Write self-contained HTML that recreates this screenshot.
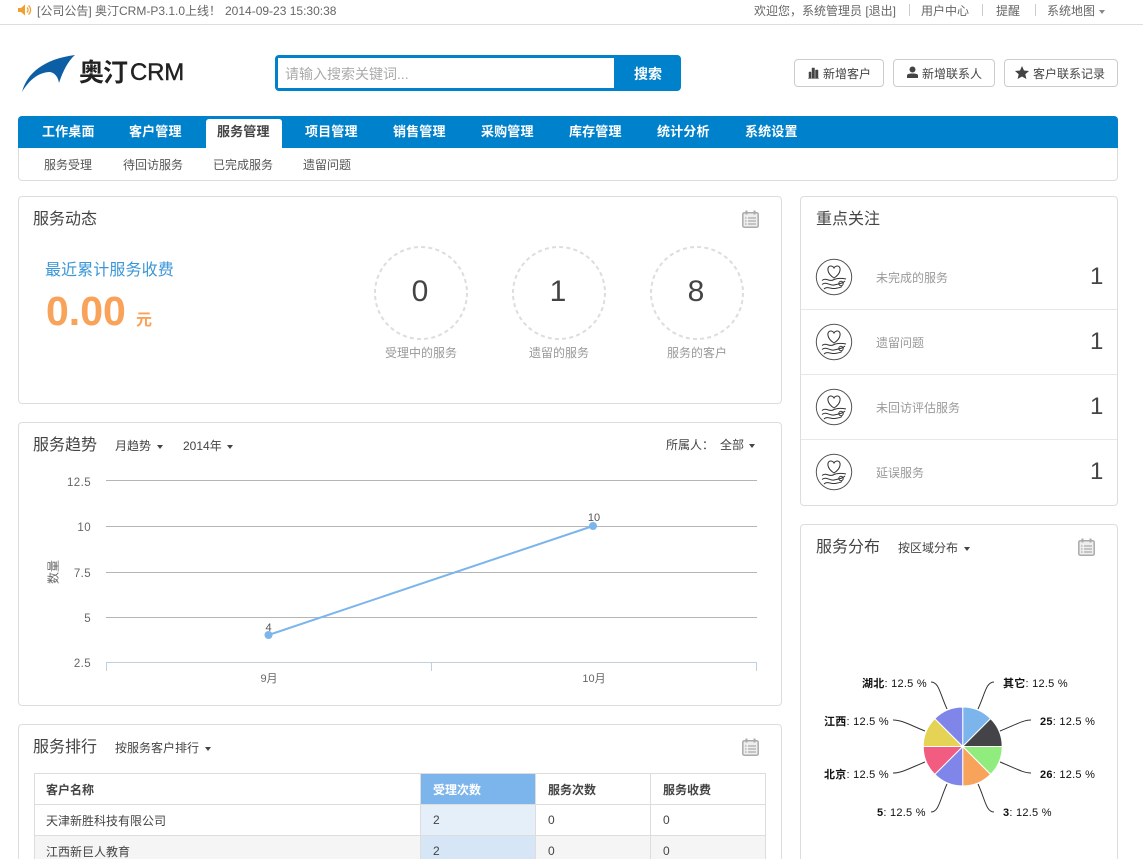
<!DOCTYPE html>
<html lang="zh"><head><meta charset="utf-8"><title>奥汀CRM</title>
<style>
html{margin:0;padding:0;background:#fff;width:1143px;height:859px;overflow:hidden}
body{margin:0;padding:0;background:#fff;width:1143px;height:859px;overflow:hidden;position:relative;font-family:"Liberation Sans","Noto Sans CJK SC",sans-serif;font-size:12px;color:#555}
.t{position:absolute;white-space:nowrap;line-height:20px;height:20px}
.b{position:absolute;box-sizing:border-box}
.panel{position:absolute;box-sizing:border-box;background:#fff;border:1px solid #ddd;border-radius:4px}
.h{font-size:16px;color:#444}
.sep{position:absolute;top:4px;width:1px;height:12px;background:#ccc}
.btn{position:absolute;top:59px;height:28px;box-sizing:border-box;border:1px solid #ccc;border-radius:4px;background:#fff;color:#444}
.nav{top:122px;font-size:13px;font-weight:bold;color:#fff;letter-spacing:.15px}
.sub{top:155px;color:#555}
.car{display:inline-block;width:0;height:0;border-left:3.500px solid transparent;border-right:3.500px solid transparent;border-top:4px solid #444;vertical-align:middle;margin-left:6px}
.num{position:absolute;top:247px;width:94px;height:90px;text-align:center;line-height:90px;font-size:30px;color:#444}
.cap{top:343px;color:#999;width:94px;text-align:center}
.row{position:absolute;left:801px;width:316px;height:1px;background:#e8e8e8}
.big{font-size:24px;color:#444;left:1090px;line-height:24px;height:24px}
.lb{left:876px;color:#999}
.cell{position:absolute;box-sizing:border-box;border:1px solid #ddd;padding:0 12px;line-height:30px;color:#444}
.zh{padding-top:1px}
svg{position:absolute;overflow:visible}
svg text{font-family:"Liberation Sans","Noto Sans CJK SC",sans-serif}
</style></head><body>

<!-- top bar -->
<div class="b" style="left:0;top:24px;width:1143px;height:1px;background:#ddd"></div>
<svg style="left:18px;top:3px" width="15" height="14" viewBox="0 0 15 14"><path d="M0 5h3l4-3.500v11L3 9H0z" fill="#f0a030"/><path d="M9 4.500a3.500 3.500 0 0 1 0 5M10.500 2.500a6 6 0 0 1 0 9" fill="none" stroke="#f0a030" stroke-width="1.300"/></svg>
<div class="t" style="left:37px;top:1px;color:#666">[公司公告] 奥汀CRM-P3.1.0上线！</div>
<div class="t" style="left:225px;top:1px;color:#666">2014-09-23 15:30:38</div>
<div class="t" style="left:754px;top:1px;color:#666">欢迎您，系统管理员 [退出]</div>
<div class="sep" style="left:909px"></div>
<div class="t" style="left:921px;top:1px;color:#666">用户中心</div>
<div class="sep" style="left:982px"></div>
<div class="t" style="left:996px;top:1px;color:#666">提醒</div>
<div class="sep" style="left:1035px"></div>
<div class="t" style="left:1047px;top:1px;color:#666">系统地图<span class="car" style="border-top-color:#888;margin-left:4px"></span></div>

<!-- logo -->
<svg style="left:20px;top:53px" width="60" height="40" viewBox="0 0 60 40"><path d="M2 39C7 20 24 6 55 2C48 8 43 18 39 30C38 24 35 20 30 19C19 19 9 27 2 39Z" fill="#0d5fa5"/></svg>
<div class="t" style="left:79px;top:58px;height:30px;line-height:30px;font-family:'Liberation Sans','Noto Sans CJK SC',sans-serif;font-size:25px;font-weight:bold;color:#222;letter-spacing:-1px">奥汀</div>
<div class="t" style="left:130px;top:58px;height:30px;line-height:30px;font-size:24px;color:#222;letter-spacing:-.2px;-webkit-text-stroke:.4px #222">CRM</div>

<!-- search -->
<div class="b" style="left:275px;top:55px;width:406px;height:36px;background:#0081cc;border-radius:4px"></div>
<div class="b" style="left:278px;top:58px;width:336px;height:30px;background:#fff"></div>
<div class="t" style="left:285px;top:64px;font-size:14px;color:#aaa">请输入搜索关键词...</div>
<div class="t" style="left:634px;top:64px;font-size:14px;font-weight:bold;color:#fff">搜索</div>

<!-- buttons -->
<div class="btn" style="left:794px;width:90px"></div>
<svg style="left:808px;top:67px" width="12" height="12" viewBox="0 0 12 12"><path d="M1 11V5h2v6zM4 11V1h2.500v10zM7.500 11V3H10v8zM0 11.500h11" fill="#444" stroke="#444" stroke-width=".5"/></svg>
<div class="t" style="left:823px;top:64px;color:#444">新增客户</div>
<div class="btn" style="left:893px;width:102px"></div>
<svg style="left:906px;top:66px" width="13" height="13" viewBox="0 0 13 13"><circle cx="6.500" cy="3.500" r="3" fill="#444"/><path d="M1 12V9.500C1 8 3 7.500 6.500 7.500S12 8 12 9.500V12z" fill="#444"/></svg>
<div class="t" style="left:922px;top:64px;color:#444">新增联系人</div>
<div class="btn" style="left:1004px;width:114px"></div>
<svg style="left:1015px;top:66px" width="14" height="13" viewBox="0 0 14 13"><path d="M7 0l2 4.500 5 .5-3.700 3.200 1.100 4.800L7 10.500 2.600 13l1.100-4.800L0 5l5-.5z" fill="#444"/></svg>
<div class="t" style="left:1033px;top:64px;color:#444">客户联系记录</div>

<!-- nav -->
<div class="b" style="left:18px;top:116px;width:1100px;height:65px;border:1px solid #ddd;border-radius:4px;background:#fff"></div>
<div class="b" style="left:18px;top:116px;width:1100px;height:32px;background:#0081cc;border-radius:4px 4px 0 0"></div>
<div class="b" style="left:206px;top:119px;width:76px;height:29px;background:#fff;border-radius:3px 3px 0 0"></div>
<div class="t nav" style="left:42px">工作桌面</div>
<div class="t nav" style="left:129px">客户管理</div>
<div class="t nav" style="left:217px;color:#444">服务管理</div>
<div class="t nav" style="left:305px">项目管理</div>
<div class="t nav" style="left:393px">销售管理</div>
<div class="t nav" style="left:481px">采购管理</div>
<div class="t nav" style="left:569px">库存管理</div>
<div class="t nav" style="left:657px">统计分析</div>
<div class="t nav" style="left:745px">系统设置</div>
<div class="t sub" style="left:44px">服务受理</div>
<div class="t sub" style="left:123px">待回访服务</div>
<div class="t sub" style="left:213px">已完成服务</div>
<div class="t sub" style="left:303px">遗留问题</div>

<!-- 服务动态 -->
<div class="panel" style="left:18px;top:196px;width:764px;height:208px"></div>
<div class="t h" style="left:33px;top:210px">服务动态</div>
<svg style="left:742px;top:210px" width="17" height="18" viewBox="0 0 17 18"><rect x=".8" y="2.800" width="15.400" height="14.400" rx="1.500" fill="#eee" stroke="#aaa" stroke-width="1.500"/><path d="M4.500 0.500v4M12.500 0.500v4" stroke="#aaa" stroke-width="2"/><path d="M6 8h8M6 11h8M6 14h8M3 8h1.500M3 11h1.500M3 14h1.500" stroke="#999" stroke-width="1"/></svg>
<div class="t" style="left:45px;top:261px;font-size:16px;color:#3c97d8;letter-spacing:.1px">最近累计服务收费</div>
<div class="t" style="left:46px;top:288px;height:46px;line-height:46px;font-size:41px;font-weight:bold;color:#f9a25a">0.00</div>
<div class="t" style="left:136px;top:311px;font-size:16px;font-weight:bold;color:#f9a25a">元</div>
<svg style="left:0;top:0" width="1143" height="859"><g fill="none" stroke="#ddd" stroke-width="2" stroke-dasharray="4 3.220"><circle cx="421" cy="293" r="46"/><circle cx="559" cy="293" r="46"/><circle cx="697" cy="293" r="46"/></g></svg>
<div class="num" style="left:373px">0</div>
<div class="num" style="left:511px">1</div>
<div class="num" style="left:649px">8</div>
<div class="t cap" style="left:374px">受理中的服务</div>
<div class="t cap" style="left:512px">遗留的服务</div>
<div class="t cap" style="left:650px">服务的客户</div>

<!-- 服务趋势 -->
<div class="panel" style="left:18px;top:422px;width:764px;height:284px"></div>
<div class="t h" style="left:33px;top:436px">服务趋势</div>
<div class="t" style="left:115px;top:436px;color:#444">月趋势<span class="car"></span></div>
<div class="t" style="left:183px;top:436px;color:#444">2014年<span class="car" style="margin-left:5px"></span></div>
<div class="t" style="left:666px;top:435px;color:#444">所属人：</div>
<div class="t" style="left:720px;top:435px;color:#444">全部<span class="car" style="margin-left:5px"></span></div>
<svg style="left:0;top:0" width="1143" height="859">
<g stroke="#b5b5b5" stroke-width="1" fill="none">
<path d="M106 480.500H757M106 526.500H757M106 572.500H757M106 617.500H757"/>
</g>
<path d="M106 662.500H757M106.500 662V671M431.500 662V671M756.500 662V671" stroke="#c0d0e0" fill="none"/>
<path d="M268.500 635L593 526" stroke="#7cb5ec" stroke-width="2" fill="none"/>
<circle cx="268.500" cy="635" r="4" fill="#7cb5ec"/><circle cx="593" cy="526" r="4" fill="#7cb5ec"/>
<g font-size="11.500" fill="#666" text-anchor="end" letter-spacing=".4">
<text x="91" y="486">12.5</text><text x="91" y="531">10</text><text x="91" y="577">7.5</text><text x="91" y="622">5</text><text x="91" y="667">2.5</text>
</g>
<g font-size="11" fill="#555" text-anchor="middle">
<text x="268.500" y="631">4</text><text x="594" y="521">10</text>
<text x="269" y="682" fill="#666">9月</text><text x="594" y="682" fill="#666">10月</text>
</g>
<text transform="translate(57.500 572) rotate(-90)" font-size="12" fill="#666" text-anchor="middle">数量</text>
</svg>

<!-- 服务排行 -->
<div class="panel" style="left:18px;top:724px;width:764px;height:150px"></div>
<div class="t h" style="left:33px;top:738px">服务排行</div>
<div class="t" style="left:115px;top:738px;color:#444">按服务客户排行<span class="car"></span></div>
<svg style="left:742px;top:738px" width="17" height="18" viewBox="0 0 17 18"><rect x=".8" y="2.800" width="15.400" height="14.400" rx="1.500" fill="#eee" stroke="#aaa" stroke-width="1.500"/><path d="M4.500 0.500v4M12.500 0.500v4" stroke="#aaa" stroke-width="2"/><path d="M6 8h8M6 11h8M6 14h8M3 8h1.500M3 11h1.500M3 14h1.500" stroke="#999" stroke-width="1"/></svg>
<div class="cell zh" style="left:34px;top:773px;width:387px;height:32px;font-weight:bold;padding-left:11px">客户名称</div>
<div class="cell zh" style="left:420px;top:773px;width:116px;height:32px;font-weight:bold;background:#7cb5ec;color:#fff">受理次数</div>
<div class="cell zh" style="left:535px;top:773px;width:116px;height:32px;font-weight:bold">服务次数</div>
<div class="cell zh" style="left:650px;top:773px;width:116px;height:32px;font-weight:bold">服务收费</div>
<div class="cell zh" style="left:34px;top:804px;width:387px;height:32px;padding-left:11px">天津新胜科技有限公司</div>
<div class="cell" style="left:420px;top:804px;width:116px;height:32px;background:#e5eff9">2</div>
<div class="cell" style="left:535px;top:804px;width:116px;height:32px">0</div>
<div class="cell" style="left:650px;top:804px;width:116px;height:32px">0</div>
<div class="cell zh" style="left:34px;top:835px;width:387px;height:32px;background:#f5f5f5;padding-left:11px">江西新巨人教育</div>
<div class="cell" style="left:420px;top:835px;width:116px;height:32px;background:#d6e6f7">2</div>
<div class="cell" style="left:535px;top:835px;width:116px;height:32px;background:#f5f5f5">0</div>
<div class="cell" style="left:650px;top:835px;width:116px;height:32px;background:#f5f5f5">0</div>

<!-- 重点关注 -->
<div class="panel" style="left:800px;top:196px;width:318px;height:310px"></div>
<div class="t h" style="left:816px;top:210px">重点关注</div>
<div class="row" style="top:309px"></div><div class="row" style="top:374px"></div><div class="row" style="top:439px"></div>
<svg style="left:0;top:0" width="1143" height="859">
<defs><g id="hand" fill="none" stroke="#333" stroke-width="1"><circle cx="0" cy="0" r="17.700" stroke="#555"/><path d="M0 1C-8 -4 -7 -11 -3.500 -11C-1.500 -11 -.5 -10 0 -9C.5 -10 1.500 -11 3.500 -11C7 -11 8 -4 0 1Z"/><path d="M-12 3.500C-8 0 -5 5 -1 3C3 1 7 1 12 2M-12 7.500C-8 4 -4 9 0 8C4 7 8 7 11 4M-10 12C-7 9 -3 12 1 11.500C3 11 6 11 8 9.500"/><circle cx="7" cy="6.500" r="2.200"/></g></defs>
<use href="#hand" x="834" y="277"/><use href="#hand" x="834" y="342"/><use href="#hand" x="834" y="407"/><use href="#hand" x="834" y="472"/>
</svg>
<div class="t lb" style="top:268px">未完成的服务</div><div class="t big" style="top:265px">1</div>
<div class="t lb" style="top:333px">遗留问题</div><div class="t big" style="top:330px">1</div>
<div class="t lb" style="top:398px">未回访评估服务</div><div class="t big" style="top:395px">1</div>
<div class="t lb" style="top:463px">延误服务</div><div class="t big" style="top:460px">1</div>

<!-- 服务分布 -->
<div class="panel" style="left:800px;top:524px;width:318px;height:350px"></div>
<div class="t h" style="left:816px;top:538px">服务分布</div>
<div class="t" style="left:898px;top:538px;color:#444">按区域分布<span class="car"></span></div>
<svg style="left:1078px;top:538px" width="17" height="18" viewBox="0 0 17 18"><rect x=".8" y="2.800" width="15.400" height="14.400" rx="1.500" fill="#eee" stroke="#aaa" stroke-width="1.500"/><path d="M4.500 0.500v4M12.500 0.500v4" stroke="#aaa" stroke-width="2"/><path d="M6 8h8M6 11h8M6 14h8M3 8h1.500M3 11h1.500M3 14h1.500" stroke="#999" stroke-width="1"/></svg>
<svg style="left:0;top:0" width="1143" height="859">
<g stroke="#fff" stroke-width="1">
<path d="M962.700 746.500V707A39.500 39.500 0 0 1 990.600 718.600Z" fill="#7cb5ec"/>
<path d="M962.700 746.500L990.600 718.600A39.500 39.500 0 0 1 1002.200 746.500Z" fill="#434348"/>
<path d="M962.700 746.500H1002.200A39.500 39.500 0 0 1 990.600 774.400Z" fill="#90ed7d"/>
<path d="M962.700 746.500L990.600 774.400A39.500 39.500 0 0 1 962.700 786Z" fill="#f7a35c"/>
<path d="M962.700 746.500V786A39.500 39.500 0 0 1 934.800 774.400Z" fill="#8085e9"/>
<path d="M962.700 746.500L934.800 774.400A39.500 39.500 0 0 1 923.200 746.500Z" fill="#f15c80"/>
<path d="M962.700 746.500H923.200A39.500 39.500 0 0 1 934.800 718.600Z" fill="#e4d354"/>
<path d="M962.700 746.500L934.800 718.600A39.500 39.500 0 0 1 962.700 707Z" fill="#8085e9"/>
</g>
<g fill="none" stroke="#333" stroke-width="1">
<path d="M978 709C985 694 986 682 994 682"/>
<path d="M1000 731C1015 725 1023 720 1031 720"/>
<path d="M1000 762C1015 768 1023 773 1031 773"/>
<path d="M978 784C985 799 986 812 994 812"/>
<path d="M947 784C940 799 939 812 931 812"/>
<path d="M925 762C910 768 902 773 893 773"/>
<path d="M925 731C910 725 902 720 893 720"/>
<path d="M947 709C940 694 939 682 931 682"/>
</g>
<g font-size="11" fill="#111" letter-spacing=".25">
<text x="1003" y="687"><tspan font-weight="bold">其它</tspan>: 12.5 %</text>
<text x="1040" y="725"><tspan font-weight="bold">25</tspan>: 12.5 %</text>
<text x="1040" y="778"><tspan font-weight="bold">26</tspan>: 12.5 %</text>
<text x="1003" y="816"><tspan font-weight="bold">3</tspan>: 12.5 %</text>
<text x="877" y="816"><tspan font-weight="bold">5</tspan>: 12.5 %</text>
<text x="824" y="778"><tspan font-weight="bold">北京</tspan>: 12.5 %</text>
<text x="824" y="725"><tspan font-weight="bold">江西</tspan>: 12.5 %</text>
<text x="862" y="687"><tspan font-weight="bold">湖北</tspan>: 12.5 %</text>
</g>
</svg>
</body></html>
